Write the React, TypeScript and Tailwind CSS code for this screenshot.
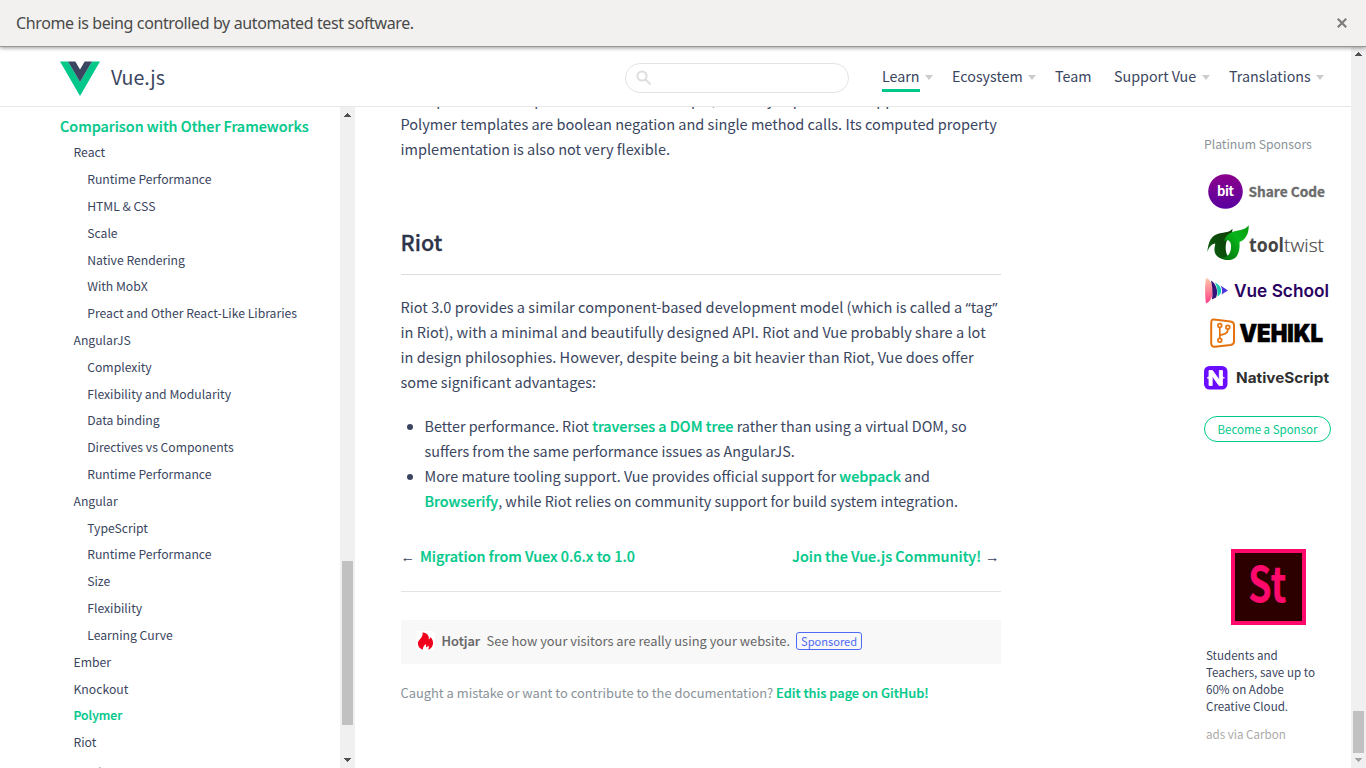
import type { ReactNode } from "react";

const toc: { label: string; level: 1 | 2; active?: boolean }[] = [
  { label: "React", level: 1 },
  { label: "Runtime Performance", level: 2 },
  { label: "HTML & CSS", level: 2 },
  { label: "Scale", level: 2 },
  { label: "Native Rendering", level: 2 },
  { label: "With MobX", level: 2 },
  { label: "Preact and Other React-Like Libraries", level: 2 },
  { label: "AngularJS", level: 1 },
  { label: "Complexity", level: 2 },
  { label: "Flexibility and Modularity", level: 2 },
  { label: "Data binding", level: 2 },
  { label: "Directives vs Components", level: 2 },
  { label: "Runtime Performance", level: 2 },
  { label: "Angular", level: 1 },
  { label: "TypeScript", level: 2 },
  { label: "Runtime Performance", level: 2 },
  { label: "Size", level: 2 },
  { label: "Flexibility", level: 2 },
  { label: "Learning Curve", level: 2 },
  { label: "Ember", level: 1 },
  { label: "Knockout", level: 1 },
  { label: "Polymer", level: 1, active: true },
  { label: "Riot", level: 1 },
];

function ScrollArrow({ down = false, color }: { down?: boolean; color: string }) {
  return (
    <svg width="8" height="4" viewBox="0 0 8 4" shapeRendering="crispEdges" className="mr-px shrink-0">
      <path d={down ? "M0 0h8L4 4z" : "M0 4h8L4 0z"} fill={color} />
    </svg>
  );
}

function InfoBar() {
  return (
    <div className="relative z-20 flex h-[47px] shrink-0 items-center justify-between border-b border-[#979797] bg-[#f2f1ef] pr-[19px] pl-4 shadow-[0_1px_4px_rgba(0,0,0,0.4)]">
      <span className="font-['Noto_Sans',sans-serif] text-[16px] leading-6 tracking-[-0.38px] text-[#4a4a4a]">
        Chrome is being controlled by automated test software.
      </span>
      <svg width="10" height="10" viewBox="0 0 10 10" fill="none" stroke="#7d7d7d" strokeWidth="2.2">
        <path d="M.8.8l8.4 8.4M9.2.8L.8 9.2" />
      </svg>
    </div>
  );
}

function NavItem({ label, width, menu = true, current = false }: { label: string; width: string; menu?: boolean; current?: boolean }) {
  return (
    <div className={`flex ${width} items-center`}>
      <span className={`h-[29px] border-b-[3px] leading-[25px] ${current ? "border-[#00c88a]" : "border-transparent"}`}>{label}</span>
      {menu && (
        <svg width="8" height="5" viewBox="0 0 8 5" className="ml-[5.500px]">
          <path d="M0 0h8L4 5z" fill="#ccc" />
        </svg>
      )}
    </div>
  );
}

function Header() {
  return (
    <header className="flex h-[60px] shrink-0 items-center border-b border-[#e8e8e8] bg-white pl-[60px]">
      <svg width="40" height="36" viewBox="0 0 40 36" className="mt-1">
        <path d="M0 .5h8L20 21 32 .5h8L20 35z" fill="#00c88a" />
        <path d="M8 .5h7.300L20 8.600 24.700.5H32L20 21z" fill="#3a4560" />
      </svg>
      <span className="ml-[11px] w-[514px] text-[19.6px] leading-8">Vue.js</span>
      <div className="mt-[2px] flex h-[30px] w-[224px] items-center rounded-full border border-[#e3e3e3] pl-[10px]">
        <svg width="16" height="16" viewBox="0 0 16 16" fill="none" stroke="#dedede" strokeWidth="2">
          <circle cx="6" cy="6" r="4.6" />
          <path d="M9.500 9.500l5 5" />
        </svg>
      </div>
      <nav className="mt-px ml-[33px] flex text-[14.3px]">
        <NavItem label="Learn" width="w-[70px]" current />
        <NavItem label="Ecosystem" width="w-[103px]" />
        <NavItem label="Team" width="w-[59px]" menu={false} />
        <NavItem label="Support Vue" width="w-[115px]" />
        <NavItem label="Translations" width="w-[100px]" />
      </nav>
    </header>
  );
}

function Sidebar() {
  return (
    <aside className="flex w-[355px] shrink-0">
      <div className="flex-1 overflow-hidden pt-[5.5px] pl-[60px]">
        <div className="text-[14.4px] leading-[26.8px] font-medium text-[#00c88a] [-webkit-text-stroke:0.2px]">Comparison with Other Frameworks</div>
        <ul>
          {toc.map((item, i) => (
            <li
              key={i}
              className={`text-[12.2px] leading-[26.82px] whitespace-nowrap ${item.level === 1 ? "pl-[13.5px]" : "pl-[27.2px]"} ${item.active ? "font-medium text-[#00c88a] [-webkit-text-stroke:0.2px]" : ""}`}
            >
              {item.label}
            </li>
          ))}
        </ul>
        <div className="mt-[4.5px] text-[14.4px] leading-[26.8px] whitespace-nowrap">Join the Vue.js Community!</div>
      </div>
      <div className="flex w-[15px] flex-col items-center bg-[#f0f0f0] pt-[6px] pb-[6px]">
        <ScrollArrow color="#505050" />
        <div className="mt-[444px] h-[164px] w-[11px] bg-[#c1c1c1]" />
        <div className="mt-auto flex">
          <ScrollArrow down color="#505050" />
        </div>
      </div>
    </aside>
  );
}

function A({ children }: { children: ReactNode }) {
  return <a className="font-medium text-[#00c88a] [-webkit-text-stroke:0.2px]">{children}</a>;
}

function Content() {
  return (
    <main className="w-[600px] shrink-0 overflow-hidden text-[14.54px] leading-[25px] whitespace-nowrap">
      <p className="-mt-[21px]">
        <span className="inline-block w-[225px]">a simple and less expressive model.</span> For example, the only expressions supported in
        <br />
        Polymer templates are boolean negation and single method calls. Its computed property
        <br />
        implementation is also not very flexible.
      </p>
      <h2 className="mt-[64px] border-b border-[#ddd] pb-[15px] text-[21.6px] leading-[34px] font-medium text-[#2c3549] [-webkit-text-stroke:0.3px]">Riot</h2>
      <p className="mt-[19px]">
        <span className="tracking-[0.03px]">Riot 3.0 provides a similar component-based development model (which is called a </span>
        <span className="font-['Noto_Sans',sans-serif] leading-none">“</span>tag
        <span className="font-['Noto_Sans',sans-serif] leading-none">”</span>
        <br />
        <span className="tracking-[0.04px]">in Riot), with a minimal and beautifully designed API. Riot and Vue probably share a lot</span>
        <br />
        <span className="tracking-[0.02px]">in design philosophies. However, despite being a bit heavier than Riot, Vue does offer</span>
        <br />
        some significant advantages:
      </p>
      <ul className="mt-[19px] list-disc pl-6 text-[14.35px]">
        <li>
          Better performance. Riot <A>traverses a DOM tree</A> rather than using a virtual DOM, so
          <br />
          suffers from the same performance issues as AngularJS.
        </li>
        <li>
          More mature tooling support. Vue provides official support for <A>webpack</A> and
          <br />
          <A>Browserify</A>, while Riot relies on community support for build system integration.
        </li>
      </ul>
      <div className="mt-[30px] flex justify-between border-b border-[#e3e3e3] pr-px pb-[23px] text-[14.4px]">
        <span>
          <span className="mr-[5px] font-['Liberation_Sans',sans-serif] leading-none">←</span>
          <A>Migration from Vuex 0.6.x to 1.0</A>
        </span>
        <span>
          <A>Join the Vue.js Community!</A>
          <span className="ml-[4px] font-['Liberation_Sans',sans-serif] leading-none">→</span>
        </span>
      </div>
      <div className="mt-7 flex h-11 items-center bg-[#f8f8f8] pb-[2px] pl-[15px] text-[12.86px] text-[#666]">
        <span className="mr-[7px] flex h-5 w-[19px] items-center justify-center rounded-sm bg-white">
          <svg width="17" height="18" viewBox="0 0 17 18">
            <path
              d="M5.500 0.500C10.500 1 12.500 4 11.700 7.500C13 7 13.200 5.700 13.200 5C15.500 7 16.300 9.500 16 12C15.500 15 13.500 17 11 17.700C12.300 16 12 14.500 11 13.500C10.500 15 9.800 15.300 9 15.300C9.500 13.500 8.800 12.500 8.200 12C8 13.500 5.500 14.500 6 17.700C3 16.800.800 14.500.900 11.500C1 7.500 6.500 6 5.500.500Z"
              fill="#f0001a"
            />
          </svg>
        </span>
        <span className="mr-[6.500px] -mt-[2px] font-medium [-webkit-text-stroke:0.2px]">Hotjar</span>
        <span className="-mt-[2px]">See how your visitors are really using your website.</span>
        <span className="ml-[6px] h-[18px] rounded-[3px] border border-[#4f69f5] px-1 text-[11.1px] leading-[16px] text-[#4f69f5]">Sponsored</span>
      </div>
      <p className="mt-[16px] text-[12.88px] text-[#8a9299]">
        Caught a mistake or want to contribute to the documentation? <A>Edit this page on GitHub!</A>
      </p>
    </main>
  );
}

function SponsorLogos() {
  return (
    <svg width="130" height="225" viewBox="0 0 130 225" className="mt-[13px] block">
      <defs>
        <linearGradient id="bit" x1="0" y1="0" x2="0" y2="1">
          <stop offset="0" stopColor="#8b008b" />
          <stop offset="1" stopColor="#5a00a0" />
        </linearGradient>
        <linearGradient id="leafDark" x1="0" y1="1" x2="1" y2="0">
          <stop offset="0" stopColor="#0d6a10" />
          <stop offset="0.5" stopColor="#0b4a0b" />
          <stop offset="1" stopColor="#153f08" />
        </linearGradient>
        <linearGradient id="leafLight" x1="1" y1="0" x2="0" y2="1">
          <stop offset="0" stopColor="#089a0e" />
          <stop offset="0.4" stopColor="#08b51a" />
          <stop offset="1" stopColor="#056b0d" />
        </linearGradient>
        <linearGradient id="pink" x1="0" y1="0" x2="0" y2="1">
          <stop offset="0" stopColor="#fdc7a8" />
          <stop offset="1" stopColor="#ff3f86" />
        </linearGradient>
      </defs>

      <circle cx="21.500" cy="22.500" r="17.300" fill="url(#bit)" />
      <text x="13" y="27" textLength="17" fontSize="13" fontWeight="700" fill="#fff">bit</text>
      <text x="44.500" y="27.500" textLength="76.500" lengthAdjust="spacingAndGlyphs" fontSize="13.500" fontWeight="700" fill="#6b6b6b" stroke="#6b6b6b" strokeWidth="0.300">Share Code</text>

      <path d="M3.300 83C4.500 72.500 7 66.500 15 64.500C21 63.200 26 63 28.500 59.700C28.500 64.500 26 67.500 24 69.500C21 73.500 21 82.500 23.500 86.500L27 91C18 91.500 9.500 88 10.500 79L11.300 74.500C8 74.500 5 78 3.300 83Z" fill="url(#leafDark)" />
      <path d="M20 72C22 65 28 62.500 34 61.500C39 60.700 42.500 59.500 44.700 56.300C45 64 42 71 35.500 73C36 80 35 91 24.500 91C22 91 19.500 90 18 88.500C24 88.500 27.500 84 27 76C26.500 71.500 24 70 20 72Z" fill="url(#leafLight)" />
      <g fontFamily="Open Sans, sans-serif" fontSize="19" fill="#454545">
        <text x="45" y="82.500" textLength="35" lengthAdjust="spacingAndGlyphs" fontWeight="700">tool</text>
        <text x="80" y="82.500" textLength="40" lengthAdjust="spacingAndGlyphs" fontWeight="300" stroke="#454545" strokeWidth="0.200">twist</text>
      </g>

      <path d="M2 109L5 110.500C10.500 117 10.500 128 4 133.500L2 134.500C.8 126 .8 116 2 109Z" fill="url(#pink)" />
      <path d="M7 111.500C13 115 14.500 124 12 128.500L8 130.500C9 124 8.500 118 7 111.500Z" fill="#34127a" />
      <path d="M11 113.500C18 117 19.500 124 13.500 127.500C14 122 13 117.500 11 113.500Z" fill="#13c8ad" />
      <path d="M16.500 116.500L24 121.500L17.500 125.500C18.700 122.500 18.300 119.500 16.500 116.500Z" fill="#4a35e0" />
      <g fontFamily="Inter, sans-serif">
        <text x="30" y="127.500" textLength="95" lengthAdjust="spacingAndGlyphs" fontSize="17.800" fontWeight="600" fill="#2a0062">Vue School</text>
        <text x="35.500" y="173" textLength="83.500" lengthAdjust="spacingAndGlyphs" fontSize="24.500" fontWeight="900" fill="#000" stroke="#000" strokeWidth="0.600">VEHIKL</text>
        <text x="32" y="213.500" textLength="93" lengthAdjust="spacingAndGlyphs" fontSize="14.500" fontWeight="700" fill="#303030">NativeScript</text>
      </g>

      <g fill="none" stroke="#e5720f">
        <path d="M10 150.500L26.500 152.500Q30 153 30 156V172.500Q30 175.500 26.500 176L11 177.700Q7.200 178 7.200 174V154Q7.200 150.200 10 150.500Z" strokeWidth="2" />
        <g strokeWidth="1.700">
          <path d="M15.800 158.500V169.500M15.800 167C17 164.500 24 166.500 23.800 160.500" />
          <circle cx="15.800" cy="156.500" r="1.900" />
          <circle cx="23.800" cy="158.300" r="1.900" />
          <circle cx="15.800" cy="171.300" r="1.900" />
        </g>
      </g>

      <rect x="0" y="197" width="23.500" height="23.500" rx="5.500" fill="#6a0cff" />
      <path d="M3 208.800C5 208.800 5 207.500 5 205V201.500H8.500L15.300 211V201.500H18.500V205C18.500 207.500 18.500 208.800 20.500 208.800C18.500 208.800 18.500 210 18.500 212.500V216.500H15L8.200 207V216.500H5V212.500C5 210 5 208.800 3 208.800Z" fill="#fff" stroke="#fff" strokeWidth="0.800" />
    </svg>
  );
}

function Sponsors() {
  return (
    <aside className="ml-[203.5px] w-[147px] shrink-0 pt-[25px]">
      <div className="text-[12.2px] leading-6 text-[#8a9299]">Platinum Sponsors</div>
      <SponsorLogos />
      <a className="mt-[22px] flex h-[26px] w-[127px] items-center justify-center rounded-full border border-[#00c88a] text-[11.5px] leading-6 text-[#00c88a]">
        Become a Sponsor
      </a>
      <svg width="75" height="76" viewBox="0 0 75 76" className="mt-[107px] ml-[27px] block">
        <rect width="75" height="76" fill="#ff0a6c" />
        <rect x="4" y="4" width="67" height="68" fill="#2d0000" />
        <text x="17" y="53" textLength="38.500" lengthAdjust="spacingAndGlyphs" fontSize="48" fontWeight="700" fill="#ff0a6c">St</text>
      </svg>
      <p className="mt-[22px] ml-[2px] text-[11.6px] leading-[17px]">
        Students and
        <br />
        Teachers, save up to
        <br />
        60% on Adobe
        <br />
        Creative Cloud.
      </p>
      <p className="mt-[11px] ml-[2px] text-[11.6px] leading-[17px] text-[#aaa]">ads via Carbon</p>
    </aside>
  );
}

export default function App() {
  return (
    <div className="flex h-[768px] w-[1366px] flex-col overflow-hidden bg-white font-['Noto_Sans_CJK_SC',sans-serif] text-[#3a4560]">
      <InfoBar />
      <div className="flex min-h-0 flex-1">
        <div className="flex w-[1351px] flex-col">
          <Header />
          <div className="flex min-h-0 flex-1 overflow-hidden">
            <Sidebar />
            <div className="ml-[45.5px] flex">
              <Content />
              <Sponsors />
            </div>
          </div>
        </div>
        <div className="flex w-[15px] flex-col items-center bg-[#f0f0f0] pt-[5px] pb-[6px]">
          <ScrollArrow color="#505050" />
          <div className="mt-auto mb-[5px] h-[42px] w-[11px] bg-[#c1c1c1]" />
          <ScrollArrow down color="#a3a3a3" />
        </div>
      </div>
    </div>
  );
}
